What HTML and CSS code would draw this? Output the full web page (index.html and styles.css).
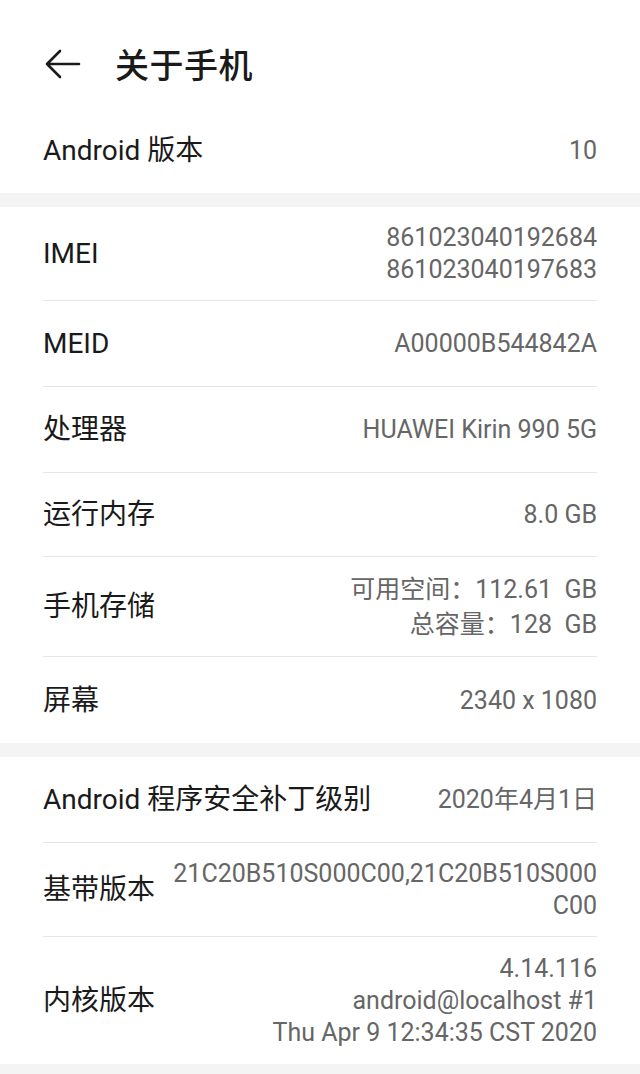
FILE: index.html
```html
<!DOCTYPE html>
<html>
<head>
  <meta charset="utf-8">
  <title>关于手机</title>
  <link rel="stylesheet" href="styles.css">
</head>
<body>
  <!-- Top bar -->
  <div class="top-bar">
    <svg class="back" width="36" height="32" viewBox="0 0 36 32">
      <path d="M2 16 H34 M15 3 L2 16 L15 29" fill="none" stroke="#1a1a1a" stroke-width="2.6" stroke-linecap="round" stroke-linejoin="round"/>
    </svg>
    <h1 class="title">关于手机</h1>
  </div>

  <div class="group">
    <div class="row">
      <div class="label">Android 版本</div>
      <div class="value">10</div>
    </div>
  </div>

  <div class="gap"></div>

  <div class="group">
    <div class="row">
      <div class="label">IMEI</div>
      <div class="value">861023040192684<br>861023040197683</div>
    </div>
    <div class="row">
      <div class="label">MEID</div>
      <div class="value">A00000B544842A</div>
    </div>
    <div class="row">
      <div class="label">处理器</div>
      <div class="value">HUAWEI Kirin 990 5G</div>
    </div>
    <div class="row short">
      <div class="label">运行内存</div>
      <div class="value">8.0 GB</div>
    </div>
    <div class="row">
      <div class="label">手机存储</div>
      <div class="value tall">可用空间：112.61&nbsp; GB<br>总容量：128&nbsp; GB</div>
    </div>
    <div class="row">
      <div class="label">屏幕</div>
      <div class="value">2340 x 1080</div>
    </div>
  </div>

  <div class="gap"></div>

  <div class="group">
    <div class="row">
      <div class="label">Android 程序安全补丁级别</div>
      <div class="value">2020年4月1日</div>
    </div>
    <div class="row">
      <div class="label">基带版本</div>
      <div class="value">21C20B510S000C00,21C20B510S000<br>C00</div>
    </div>
    <div class="row kernel">
      <div class="label">内核版本</div>
      <div class="value">4.14.116<br>android@localhost #1<br>Thu Apr 9 12:34:35 CST 2020</div>
    </div>
  </div>

  <div class="gap bottom"></div>
</body>
</html>
```

FILE: styles.css
```css
body {
  margin: 0;
  background: #fff;
  font-family: Roboto, "Noto Sans CJK SC", sans-serif;
  color: #1a1a1a;
}

/* Top bar */
.top-bar {
  height: 107px;
  display: flex;
  align-items: center;
  padding: 20px 0 0 45px;
  box-sizing: border-box;
}

.back {
  display: block;
  margin-right: 34px;
}

.title {
  margin: 0;
  font-family: "Noto Sans CJK SC", sans-serif;
  font-size: 34px;
  font-weight: 500;
  letter-spacing: 0.5px;
  color: #1a1a1a;
}

/* List groups */
.group {
  padding: 0 43px;
}

.row {
  display: flex;
  align-items: center;
  justify-content: space-between;
  min-height: 86px;
  padding: 15px 0 14px;
  box-sizing: border-box;
  border-bottom: 1px solid #e6e6e6;
}

.row:last-child {
  border-bottom: none;
}

.row.short {
  min-height: 84px;
}

.row.kernel {
  padding: 16px 0 15px;
}

.label {
  font-size: 28px;
  line-height: 32px;
  white-space: nowrap;
  color: #1a1a1a;
}

.value {
  font-size: 25px;
  line-height: 32px;
  text-align: right;
  color: #666;
  white-space: nowrap;
}

.value.tall {
  line-height: 35px;
}

.gap {
  height: 14px;
  background: #f4f4f4;
}

.gap.bottom {
  height: 13px;
}
```
